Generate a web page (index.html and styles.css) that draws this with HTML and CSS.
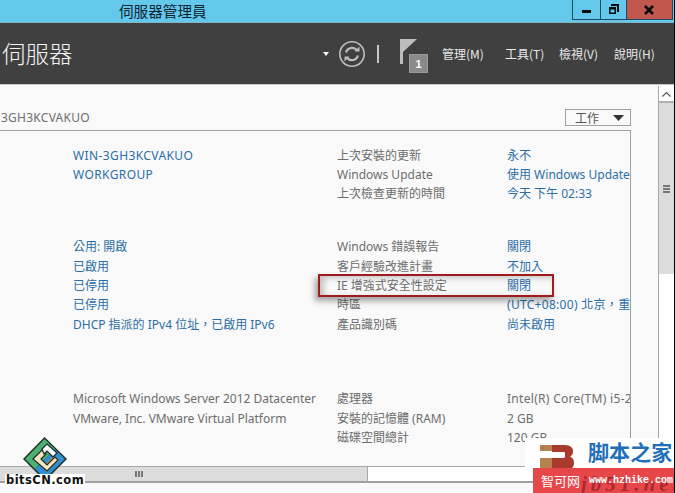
FILE: index.html
```html
<!DOCTYPE html>
<html lang="zh-Hant">
<head>
<meta charset="utf-8">
<title>伺服器管理員</title>
<link rel="stylesheet" href="styles.css">
</head>
<body>
<div class="window">
  <div class="titlebar">
    <span class="app-title">伺服器管理員</span>
    <div class="win-controls">
      <div class="win-btn win-min"><svg width="12" height="8" viewBox="0 0 12 8"><rect x="1" y="4" width="9" height="3" fill="#0b0b0b"/></svg></div>
      <div class="win-btn win-restore"><svg width="12" height="12" viewBox="0 0 12 12"><path d="M3 0h8v8H9V2H3z" fill="#0b0b0b"/><path d="M1 3h7v7H1z M2.500 5.500v3h4v-3z" fill="#0b0b0b" fill-rule="evenodd"/></svg></div>
      <div class="win-btn win-close"><svg width="12" height="10" viewBox="0 0 12 10"><path d="M1 1l8 8M9 1L1 9" stroke="#0b0b0b" stroke-width="2.600" fill="none"/></svg></div>
    </div>
  </div>
  <header class="header">
    <div class="page-title">伺服器</div>
    <div class="tools">
      <svg class="caret" width="6" height="4" viewBox="0 0 6 4"><path d="M0 0h6L3 4z" fill="#fff"/></svg>
      <svg class="refresh" width="28" height="28" viewBox="0 0 28 28"><circle cx="14" cy="14" r="12.200" fill="none" stroke="#bdbdbd" stroke-width="1.600"/><path d="M8 12.500a6.300 6.300 0 0 1 11-2.300M20 15.500a6.300 6.300 0 0 1-11 2.300" fill="none" stroke="#bdbdbd" stroke-width="2.200"/><path d="M16.500 11.500h5v-5zM11.500 16.500h-5v5z" fill="#bdbdbd"/></svg>
      <span class="divider"></span>
      <div class="flag">
        <svg width="18" height="25" viewBox="0 0 18 25"><rect x="0" y="0" width="3" height="25" fill="#bdbdbd"/><path d="M3 0h14L3 13z" fill="#bdbdbd"/></svg>
        <span class="badge">1</span>
      </div>
    </div>
    <nav class="menu">
      <span class="menu-m1">管理(M)</span>
      <span class="menu-m2">工具(T)</span>
      <span class="menu-m3">檢視(V)</span>
      <span class="menu-m4">說明(H)</span>
    </nav>
  </header>
  <div class="content">
    <div class="workspace">
      <div class="pane">
        <div class="pane-head">
          <span class="crumb">3GH3KCVAKUO</span>
          <div class="tasks"><span>工作</span><svg width="11" height="6" viewBox="0 0 11 6"><path d="M0 0h11L5.500 6z" fill="#333"/></svg></div>
        </div>
        <div class="panel">
          <div class="group group-a">
            <span class="val caps">WIN-3GH3KCVAKUO</span><span class="lbl">上次安裝的更新</span><span class="val">永不</span>
            <span class="val caps">WORKGROUP</span><span class="lbl">Windows Update</span><span class="val">使用 Windows Update</span>
            <span></span><span class="lbl">上次檢查更新的時間</span><span class="val">今天 下午 02:33</span>
          </div>
          <div class="group group-b">
            <span class="val">公用: 開啟</span><span class="lbl">Windows 錯誤報告</span><span class="val">關閉</span>
            <span class="val">已啟用</span><span class="lbl">客戶經驗改進計畫</span><span class="val">不加入</span>
            <span class="val">已停用</span><span class="lbl">IE 增強式安全性設定</span><span class="val">關閉</span>
            <span class="val">已停用</span><span class="lbl">時區</span><span class="val wide">(UTC+08:00) 北京，重慶，香港</span>
            <span class="val">DHCP 指派的 IPv4 位址，已啟用 IPv6</span><span class="lbl">產品識別碼</span><span class="val">尚未啟用</span>
          </div>
          <div class="group group-c">
            <span class="lbl">Microsoft Windows Server 2012 Datacenter</span><span class="lbl">處理器</span><span class="lbl wide">Intel(R) Core(TM) i5-2400</span>
            <span class="lbl">VMware, Inc. VMware Virtual Platform</span><span class="lbl">安裝的記憶體 (RAM)</span><span class="lbl">2 GB</span>
            <span></span><span class="lbl">磁碟空間總計</span><span class="lbl">120 GB</span>
          </div>
        </div>
      </div>
      <div class="hscroll">
        <div class="hthumb"><span class="grip-v"></span></div>
      </div>
    </div>
    <div class="vscroll">
      <div class="vbtn"><svg width="9" height="6" viewBox="0 0 9 6"><path d="M.5 5.500l4-4 4 4" fill="none" stroke="#555" stroke-width="1.200"/></svg></div>
      <div class="vthumb"><span class="grip-h"></span></div>
    </div>
  </div>

  <div class="highlight"></div>

  <div class="mark-left">
    <svg class="mark-gem" width="46" height="46" viewBox="0 0 46 46">
      <path d="M22.500 1L45 23 23 45 1 23z" fill="#1f2a24"/>
      <path d="M22.500 3L33 13 13 33 3 23z" fill="#4cb070"/>
      <path d="M33 13L43 23 23 43 13 33z" fill="#2f8fd2"/>
      <path d="M23 29l9-9 5 4-13 12z" fill="#ea8c1f"/>
      <path d="M11 23l9-9 4 4-5 5 6 6 8-8 3 3-11 11z" fill="#f8e6c2" stroke="#1f2a24" stroke-width="1.200"/>
      <path d="M20 13l5-5 10 9-4 4-6-6-3 3z" fill="#fff" stroke="#1f2a24" stroke-width="1.200"/>
    </svg>
    <span class="mark-text">bitsCN.com</span>
  </div>

  <div class="mark-right">
    <div class="mr-top">
      <svg class="mr-logo" width="36" height="24" viewBox="0 0 36 24">
        <rect x="0" y="0" width="12" height="6" fill="#b5824c"/>
        <rect x="0" y="13" width="12" height="11" fill="#b5824c"/>
        <path d="M12 0h13q8 0 8 6.500 0 3.500-3 5 4 1.500 4 6.500 0 4-3 6H12V13h11q2 0 2-1.500V8q0-1-2-1H12z" fill="#a83a2e"/>
      </svg>
      <span class="mr-name">脚本之家</span>
    </div>
    <div class="mr-band">
      <span class="mr-script">jb51.net</span>
      <span class="mr-cn">智可网</span>
      <span class="mr-url">www.hzhike.com</span>
    </div>
  </div>
</div>
</body>
</html>
```
FILE: styles.css
```css
* { box-sizing: border-box; }
html, body { margin: 0; padding: 0; }
body { width: 675px; height: 493px; overflow: hidden; background: #f9f9f9; }

.window {
  position: relative;
  width: 675px;
  height: 493px;
  display: flex;
  flex-direction: column;
  overflow: hidden;
  border-right: 1px solid #000;
  font-family: "Noto Sans", "Noto Sans CJK TC", sans-serif;
  font-size: 12px;
}

.titlebar {
  height: 23px;
  flex: none;
  background: #63c8ea;
  border-bottom: 1px solid #7db4c6;
  display: flex;
  justify-content: space-between;
  padding-left: 119px;
  padding-right: 1px;
}
.app-title { font-size: 14.600px; line-height: 22px; color: #123; font-family: "Noto Sans CJK TC", sans-serif; }
.win-controls { display: flex; height: 20px; border: 1px solid #1d4a5c; border-top: 0; }
.win-btn { display: flex; align-items: center; justify-content: center; }
.win-min { width: 28px; border-right: 1px solid #1d4a5c; }
.win-restore { width: 26px; border-right: 1px solid #1d4a5c; }
.win-close { width: 45px; background: #c0584e; }

.header {
  height: 62px;
  flex: none;
  background: #404040;
  border-bottom: 1px solid #c8c8c8;
  display: flex;
  align-items: center;
  color: #fff;
}
.page-title { width: 323px; padding-left: 2px; font-size: 23.500px; font-family: "Noto Sans CJK TC", sans-serif; font-weight: 300; line-height: 62px; color: #f4f4f4; padding-bottom: 1px; }
.tools { display: flex; align-items: center; width: 119px; }
.caret { margin-top: 1px; }
.refresh { margin-left: 9px; }
.divider { width: 2px; height: 18px; background: #c8c8c8; margin-left: 11px; }
.flag { position: relative; width: 18px; height: 25px; margin-left: 21px; margin-top: -4px; }
.flag svg { display: block; }
.badge {
  position: absolute; left: 9px; top: 15px;
  width: 19px; height: 19px;
  background: #8a8a8a; border: 1px solid #9a9a9a;
  color: #fff; font: bold 11px/18px "Liberation Sans", sans-serif; text-align: center;
}
.menu { display: flex; font-family: "Noto Sans CJK TC", sans-serif; font-size: 12px; color: #e8e8e8; line-height: 16px; }
.menu-m1 { width: 63px; }
.menu-m2 { width: 54px; }
.menu-m3 { width: 55px; }

.content { flex: 1; display: flex; min-height: 0; }
.workspace { flex: 1; min-width: 0; display: flex; flex-direction: column; padding-bottom: 10px; }
.pane { flex: 1; min-height: 0; overflow: hidden; }
.pane-head { height: 45px; width: 631px; display: flex; justify-content: space-between; align-items: flex-end; padding-bottom: 4px; }
.crumb { color: #6e6e6e; font-size: 12px; line-height: 17px; margin-left: 1px; letter-spacing: .25px; }
.tasks {
  width: 66px; height: 17px;
  border: 1px solid #a0a0a0;
  display: flex; align-items: center; justify-content: space-between;
  padding: 0 6px 0 9px;
  color: #555; font-size: 12px;
  font-family: "Noto Sans CJK TC", sans-serif;
}
.panel {
  width: 631px;
  height: 340px;
  border-top: 1px solid #a0a0a0;
  border-right: 1px solid #a0a0a0;
  padding-left: 73px;
  padding-top: 14.500px;
  overflow: hidden;
}
.group {
  display: grid;
  grid-template-columns: 264px 170px 123px;
  grid-auto-rows: 19.400px;
  line-height: 19.400px;
  white-space: nowrap;
}
.group > span { overflow: hidden; }
.group > span:nth-child(3n+1) { overflow: visible; }
.group-a { margin-bottom: 33.500px; }
.group-b { margin-bottom: 55px; }
.lbl { color: #6d6d6d; }
.val { color: #2b6ea6; }
.caps { letter-spacing: .4px; }
.wide { letter-spacing: .3px; }

.hscroll {
  height: 17px;
  flex: none;
  background: #fff;
  border-top: 1px solid #a8a8a8;
  border-bottom: 2px solid #a0a0a0;
}
.hthumb { width: 368px; height: 100%; background: #dcdcdc; border-right: 1px solid #a8a8a8; display: flex; align-items: center; padding-left: 135px; }
.grip-v { width: 8px; height: 6px; background: repeating-linear-gradient(90deg, #777 0 2px, #dcdcdc 2px 3px); }

.vscroll { width: 16px; flex: none; display: flex; flex-direction: column; background: #fff; border-left: 1px solid #a8a8a8; margin-top: 1px; height: 395px; }
.vbtn { height: 17px; flex: none; display: flex; align-items: center; justify-content: center; background: #fff; border-bottom: 2px solid #b0b0b0; }
.vthumb { height: 171px; background: #dcdcdc; display: flex; align-items: center; justify-content: center; }
.grip-h { width: 7px; height: 8px; background: repeating-linear-gradient(0deg, #777 0 2px, #dcdcdc 2px 3px); }

.highlight {
  position: absolute;
  left: 318px; top: 274px;
  width: 236px; height: 23px;
  border: 2px solid #a01c1c;
  box-shadow: -3px 4px 6px rgba(0,0,0,.35), inset 4px 2px 6px rgba(0,0,0,.22);
}

.mark-left { position: absolute; left: 0; top: 436px; width: 90px; height: 52px; }
.mark-gem { position: absolute; left: 22px; top: 0; }
.mark-text {
  position: absolute; left: 5px; top: 38px;
  background: #fff;
  padding: 0 1px;
  font: bold 11.500px/12px "DejaVu Sans", sans-serif;
  letter-spacing: .45px;
  color: #111;
}

.mark-right { position: absolute; right: 0; top: 438px; width: 149px; height: 55px; }
.mr-top { height: 30px; background: #fff; display: flex; overflow: hidden; }
.mr-logo { margin: 7px 0 0 15px; flex: none; }
.mr-name { margin-left: 12px; font: bold 21px/27px "Noto Sans CJK SC", sans-serif; color: #1f6fb8; letter-spacing: .1px; white-space: nowrap; }
.mr-band {
  position: relative;
  height: 25px; margin-left: 8px;
  background: #e8474a;
  display: flex; align-items: center;
  overflow: hidden;
  white-space: nowrap;
}
.mr-script { position: absolute; left: 48px; top: 2px; font: italic bold 21px/28px "Liberation Serif", serif; letter-spacing: 4px; color: #a82a2e; }
.mr-cn { position: relative; margin-left: 8px; font: 13px/24px "Noto Sans CJK SC", sans-serif; color: #fff; }
.mr-url { position: relative; margin-left: 9px; font: bold 10px/24px "Liberation Mono", monospace; color: #fff; }
```
